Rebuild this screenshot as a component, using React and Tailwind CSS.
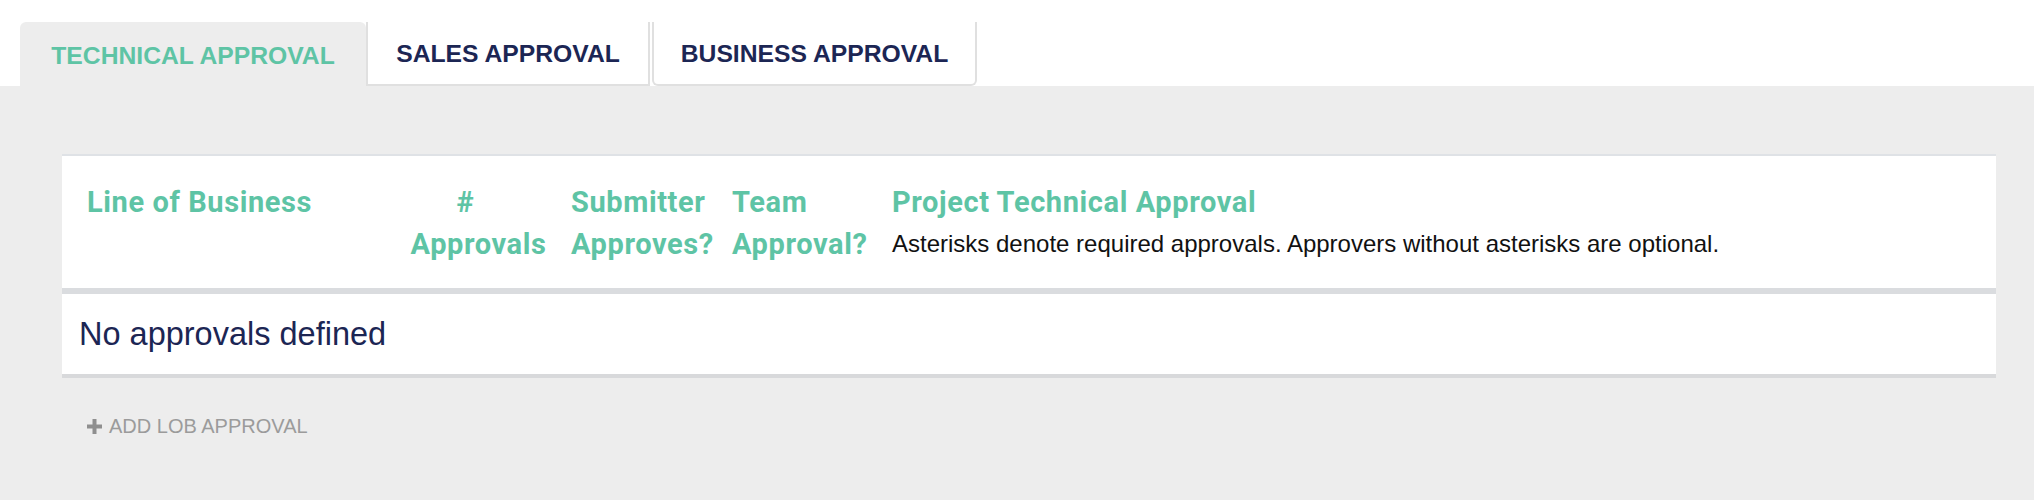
import React from 'react';

const tabs = [
  { label: 'TECHNICAL APPROVAL', active: true },
  { label: 'SALES APPROVAL' },
  { label: 'BUSINESS APPROVAL' },
];

const App = () => {
  return (
    <div className="min-h-[500px] flex flex-col bg-white font-['Liberation_Sans',Arial,sans-serif]">
      {/* Tabs */}
      <div className="flex items-end pl-[20px] pt-[22px]">
        <div className="h-[64px] w-[346px] flex items-center justify-center pt-[4px] rounded-t-[6px] bg-[#ededed] text-[24.7px] font-bold text-[#5ec4a5]">
          {tabs[0].label}
        </div>
        <div className="h-[64px] w-[284px] flex items-center justify-center pt-[2px] border-x-2 border-b-2 border-[#e0e0e0] bg-white text-[24.7px] font-bold text-[#1c2654]">
          {tabs[1].label}
        </div>
        <div className="h-[64px] w-[325px] ml-[2px] flex items-center justify-center pt-[2px] border-x-2 border-b-2 border-[#e0e0e0] rounded-b-[6px] bg-white text-[24.7px] font-bold text-[#1c2654]">
          {tabs[2].label}
        </div>
      </div>

      {/* Content */}
      <div className="flex-1 bg-[#ededed] pt-[68px] pb-[40px]">
        <div className="ml-[62px] w-[1934px] bg-white border-t-2 border-[#dfe2e6]">
          {/* Header */}
          <div className="flex h-[138px] pt-[25px] border-b-[6px] border-[#dadcdf] font-['Roboto',sans-serif] font-bold text-[29px] tracking-[0.6px] leading-[42px] text-[#5ec4a5]">
            <div className="w-[336px] pl-[25px]">Line of Business</div>
            <div className="w-[161px] text-center">
              <div className="pr-[26px]">#</div>
              <div>Approvals</div>
            </div>
            <div className="w-[160px] pl-[12px]">
              Submitter<br />Approves?
            </div>
            <div className="w-[161px] pl-[13px]">
              Team<br />Approval?
            </div>
            <div className="flex-1 pl-[12px]">
              <div>Project Technical Approval</div>
              <div className="font-['Liberation_Sans',Arial,sans-serif] font-normal tracking-normal text-[24px] text-[#111111]">
                Asterisks denote required approvals. Approvers without asterisks are optional.
              </div>
            </div>
          </div>

          {/* Rows */}
          <div className="border-b-[4px] border-[#d8d9db]">
            <div className="h-[80px] flex items-center pl-[17px] text-[32.5px] text-[#1c2654]">
              No approvals defined
            </div>
          </div>
        </div>

        <button className="flex items-center gap-[7px] mt-[37px] ml-[87px] text-[20px] leading-[23px] text-[#9b9b9b]">
          <svg width="15" height="15" viewBox="0 0 15 15" className="mt-[-1px]">
            <rect x="5.5" y="0" width="4" height="15" fill="#8f8f8f" />
            <rect x="0" y="5.5" width="15" height="4" fill="#8f8f8f" />
          </svg>
          ADD LOB APPROVAL
        </button>
      </div>
    </div>
  );
};

export default App;
